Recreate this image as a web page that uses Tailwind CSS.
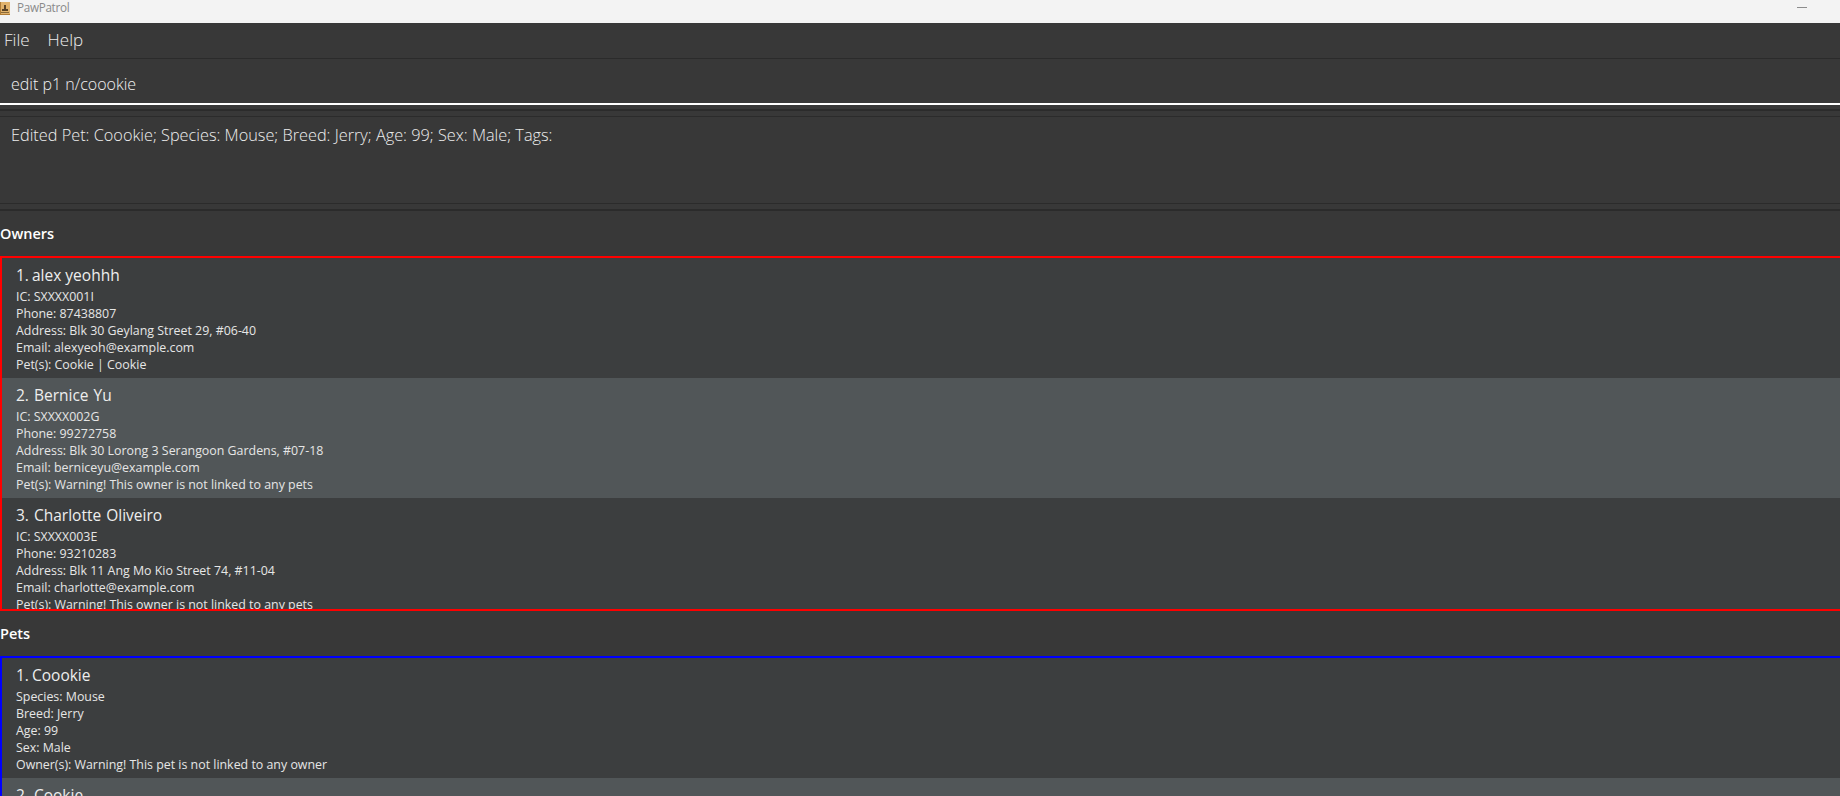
<!DOCTYPE html>
<html lang="en">
<head>
  <meta charset="UTF-8">
  <title>PawPatrol</title>
  <script src="https://cdn.jsdelivr.net/npm/@tailwindcss/browser@4"></script>
</head>
<body class="h-[796px] overflow-hidden bg-[#383838] font-['Open_Sans',sans-serif]">
  <!-- title bar -->
  <div class="h-[23px] bg-[#f3f3f3] flex items-center relative">
    <svg class="w-[10px] h-[13px] mb-[7px]" viewBox="0 0 10 13">
      <rect width="10" height="13" fill="#e0b26c"/>
      <path d="M0 0h1v12h9v1H0z" fill="#b07c36"/>
      <path d="M4 3h2v4h2v2H2V7h2z" fill="#5a4326"/>
      <path d="M1 10h8v1H1z" fill="#8a6a3a"/>
    </svg>
    <span class="ml-[7px] text-[11.7px] text-[#8a8a8a] tracking-[-0.3px] mb-[8px]">PawPatrol</span>
    <div class="absolute left-[1797px] top-[7px] w-[10px] h-px bg-[#8c8c8c]"></div>
  </div>

  <!-- menu -->
  <div class="h-[36px] border-b border-[#2b2b2b] flex items-center gap-[18px] pl-[4px] pb-[2px] text-[17px] font-light text-[#eeeeee]">
    <span>File</span>
    <span>Help</span>
  </div>

  <!-- command box -->
  <div class="h-[46px] border-b-2 border-white flex items-center pl-[11px] pt-[5px] text-[16px] font-light text-[#f2f2f2]">edit p1 n/coookie</div>
  <div class="h-[4px]"></div>
  <div class="h-[2px] bg-[#2b2b2b]"></div>
  <div class="h-[5px]"></div>

  <!-- result -->
  <div class="h-[88px] border-y border-[#2b2b2b] pl-[11px] pt-[6px] text-[16.3px] font-light text-[#eeeeee]">Edited Pet: Coookie; Species: Mouse; Breed: Jerry; Age: 99; Sex: Male; Tags:</div>
  <div class="h-[5px]"></div>
  <div class="h-[2px] bg-[#2b2b2b]"></div>

  <!-- owners -->
  <div class="h-[45px] flex items-center text-[14.5px] font-semibold text-white">Owners</div>
  <div class="h-[355px] border-y-2 border-l-2 border-[#ff0000] overflow-hidden">
    <div class="h-[120px] bg-[#3c3e3f] pl-[14px] pt-[5px] text-[#e6e6e6]">
      <div class="h-[25px] text-[15.5px] font-medium leading-[25px] text-[#eeeeee]"><span class="mr-[-1px]">1.</span> alex yeohhh</div>
      <div class="text-[12.4px] leading-[17px]">IC: SXXXX001I</div>
      <div class="text-[12.4px] leading-[17px]">Phone: 87438807</div>
      <div class="text-[12.4px] leading-[17px]">Address: Blk 30 Geylang Street 29, #06-40</div>
      <div class="text-[12.4px] leading-[17px]">Email: alexyeoh@example.com</div>
      <div class="text-[12.4px] leading-[17px]">Pet(s): Cookie | Cookie</div>
    </div>
    <div class="h-[120px] bg-[#515658] pl-[14px] pt-[5px] text-[#e6e6e6]">
      <div class="h-[25px] text-[15.5px] font-medium leading-[25px] text-[#eeeeee] [word-spacing:1px]">2. Bernice Yu</div>
      <div class="text-[12.4px] leading-[17px]">IC: SXXXX002G</div>
      <div class="text-[12.4px] leading-[17px]">Phone: 99272758</div>
      <div class="text-[12.4px] leading-[17px]">Address: Blk 30 Lorong 3 Serangoon Gardens, #07-18</div>
      <div class="text-[12.4px] leading-[17px]">Email: berniceyu@example.com</div>
      <div class="text-[12.4px] leading-[17px]">Pet(s): Warning! This owner is not linked to any pets</div>
    </div>
    <div class="h-[120px] bg-[#3c3e3f] pl-[14px] pt-[5px] text-[#e6e6e6]">
      <div class="h-[25px] text-[15.5px] font-medium leading-[25px] text-[#eeeeee] [word-spacing:1px]">3. Charlotte Oliveiro</div>
      <div class="text-[12.4px] leading-[17px]">IC: SXXXX003E</div>
      <div class="text-[12.4px] leading-[17px]">Phone: 93210283</div>
      <div class="text-[12.4px] leading-[17px]">Address: Blk 11 Ang Mo Kio Street 74, #11-04</div>
      <div class="text-[12.4px] leading-[17px]">Email: charlotte@example.com</div>
      <div class="text-[12.4px] leading-[17px]">Pet(s): Warning! This owner is not linked to any pets</div>
    </div>
  </div>

  <!-- pets -->
  <div class="h-[45px] flex items-center text-[14.5px] font-semibold text-white">Pets</div>
  <div class="h-[140px] border-t-2 border-l-2 border-[#0000ff] overflow-hidden">
    <div class="h-[120px] bg-[#3c3e3f] pl-[14px] pt-[5px] text-[#e6e6e6]">
      <div class="h-[25px] text-[15.5px] font-medium leading-[25px] text-[#eeeeee]"><span class="mr-[-1px]">1.</span> Coookie</div>
      <div class="text-[12.4px] leading-[17px]">Species: Mouse</div>
      <div class="text-[12.4px] leading-[17px]">Breed: Jerry</div>
      <div class="text-[12.4px] leading-[17px]">Age: 99</div>
      <div class="text-[12.4px] leading-[17px]">Sex: Male</div>
      <div class="text-[12.4px] leading-[17px]">Owner(s): Warning! This pet is not linked to any owner</div>
    </div>
    <div class="h-[120px] bg-[#515658] pl-[14px] pt-[5px] text-[#e6e6e6]">
      <div class="h-[25px] text-[15.5px] font-medium leading-[25px] text-[#eeeeee] [word-spacing:1px]">2. Cookie</div>
    </div>
  </div>
</body>
</html>
